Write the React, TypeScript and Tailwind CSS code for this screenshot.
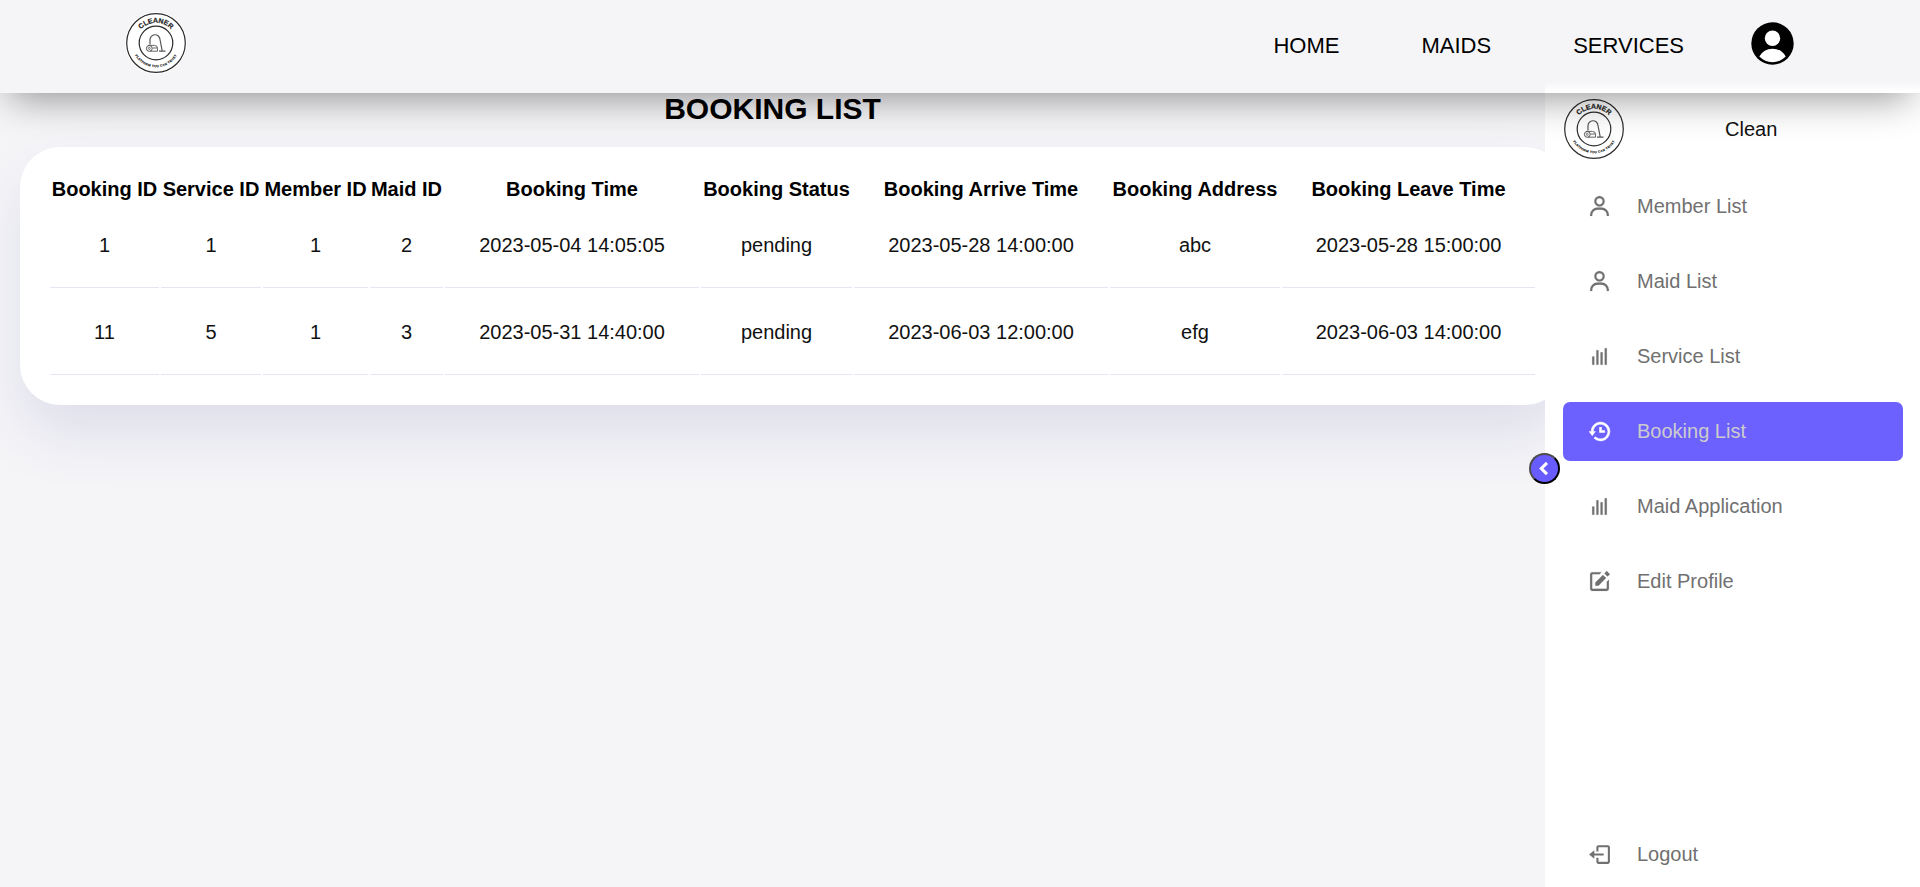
import React from "react";
import { BiUser, BiBarChart, BiHistory, BiSolidEdit, BiLogOut, BiChevronLeft } from "react-icons/bi";

const columns = [
  { title: "Booking ID", width: "w-[109px]" },
  { title: "Service ID", width: "w-[100px]" },
  { title: "Member ID", width: "w-[105px]" },
  { title: "Maid ID", width: "w-[73px]" },
  { title: "Booking Time", width: "w-[254px]" },
  { title: "Booking Status", width: "w-[151px]" },
  { title: "Booking Arrive Time", width: "w-[254px]" },
  { title: "Booking Address", width: "w-[170px]" },
  { title: "Booking Leave Time", width: "w-[253px]" },
];

const bookings = [
  ["1", "1", "1", "2", "2023-05-04 14:05:05", "pending", "2023-05-28 14:00:00", "abc", "2023-05-28 15:00:00"],
  ["11", "5", "1", "3", "2023-05-31 14:40:00", "pending", "2023-06-03 12:00:00", "efg", "2023-06-03 14:00:00"],
];

const menu = [
  { label: "Member List", Icon: BiUser },
  { label: "Maid List", Icon: BiUser },
  { label: "Service List", Icon: BiBarChart },
  { label: "Booking List", Icon: BiHistory, active: true },
  { label: "Maid Application", Icon: BiBarChart },
  { label: "Edit Profile", Icon: BiSolidEdit },
];

function Logo({ id }: { id: string }) {
  return (
    <svg viewBox="0 0 62 62" className="size-[62px] shrink-0" fill="none" stroke="#2b2b2b">
      <circle cx="31" cy="31" r="31" fill="#fff" stroke="none" />
      <circle cx="31" cy="31" r="29.3" strokeWidth="1.2" />
      <circle cx="31" cy="31" r="16.8" strokeWidth="1.2" />
      <path id={`${id}-top`} d="M10.700 31a20.300 20.300 0 0 1 40.600 0" stroke="none" />
      <path id={`${id}-bottom`} d="M6.800 31a24.200 24.200 0 0 0 48.400 0" stroke="none" />
      <text fill="#1c1c1c" stroke="#1c1c1c" strokeWidth="0.2" fontSize="7" fontWeight="700" textAnchor="middle">
        <textPath href={`#${id}-top`} startOffset="50%">CLEANER</textPath>
      </text>
      <text fill="#222" stroke="#222" strokeWidth="0.15" fontSize="3.1" fontWeight="700" textAnchor="middle" letterSpacing="0.3">
        <textPath href={`#${id}-bottom`} startOffset="50%">PLATFORM YOU CAN TRUST</textPath>
      </text>
      <path d="M25 32.500V28a5 5 0 0 1 10-.5l2.200 11.300M34 39.200h6.500" strokeWidth="1.2" stroke="#555" />
      <circle cx="24.300" cy="36.400" r="2.900" strokeWidth="1" stroke="#555" />
      <circle cx="24.300" cy="36.400" r="1" strokeWidth="0.8" stroke="#555" />
      <path d="M23 33.400h6.500a3 3 0 0 1 3 3v2.800H25M27.500 36h5" strokeWidth="0.9" stroke="#555" />
    </svg>
  );
}

export default function App() {
  return (
    <div className="flex h-[887px] w-full flex-col overflow-hidden bg-[#f5f5f8] font-['Liberation_Sans',Arial,sans-serif] text-xl leading-[23px] text-black">
      <header className="relative z-20 flex h-[93px] shrink-0 items-start justify-between bg-[#f5f5f8] bg-[linear-gradient(to_top,#fff,#fff_15%,transparent)] bg-[length:375px_12px] bg-right-bottom bg-no-repeat pl-[125px] pr-[126px] shadow-[0_15px_38px_-10px_rgba(0,0,0,0.42)]">
        <div className="pt-3">
          <Logo id="nav" />
        </div>
        <nav className="flex items-start text-[22px] leading-[26px]">
          <a className="mr-[82px] mt-[33px]">HOME</a>
          <a className="mr-[82px] mt-[33px]">MAIDS</a>
          <a className="mr-[67px] mt-[33px]">SERVICES</a>
          <svg viewBox="0 0 43 43" className="mt-[22px] size-[43px]">
            <circle cx="21.500" cy="21.500" r="21.200" />
            <circle cx="21.500" cy="16.300" r="7.700" fill="#fff" />
            <path d="M8.300 34.600a15 15 0 0 1 26.400 0a18.500 18.500 0 0 1-26.400 0z" fill="#fff" />
          </svg>
        </nav>
      </header>

      <div className="flex min-h-0 flex-1">
        <main className="w-[1545px] shrink-0">
          <h1 className="h-[54px] text-center text-3xl leading-[31px] font-bold">BOOKING LIST</h1>
          <section className="ml-5 h-[258px] w-[1545px] rounded-[40px] bg-white px-7 pt-[28px] shadow-[0_30px_60px_rgba(32,32,128,0.1)]">
            <table className="w-[1489px] table-fixed border-separate border-spacing-[2px] whitespace-nowrap">
              <thead>
                <tr>
                  {columns.map((c) => (
                    <th key={c.title} className={`${c.width} h-6 p-0 pt-px text-center font-bold`}>{c.title}</th>
                  ))}
                </tr>
              </thead>
              <tbody>
                {bookings.map((row) => (
                  <tr key={row[0]}>
                    {row.map((cell, i) => (
                      <td key={i} className="h-[85px] border-b border-[#e6e6f2] p-0 pt-px text-center text-[#111]">{cell}</td>
                    ))}
                  </tr>
                ))}
              </tbody>
            </table>
          </section>
        </main>

        <aside className="relative z-10 flex w-[375px] shrink-0 flex-col bg-white px-[18px] text-[#707070]">
          <div className="flex h-[76px] items-start pt-[5px]">
            <Logo id="side" />
            <span className="ml-[100px] mt-5 text-[#111]">Clean</span>
          </div>
          <ul className="flex flex-col gap-4 pt-2">
            {menu.map(({ label, Icon, active }) => (
              <li
                key={label}
                className={`flex h-[59px] w-[340px] items-center rounded-[7px] ${active ? "bg-[#6c60ff] text-[#ccc]" : ""}`}
              >
                <span className="flex w-[74px] justify-center pr-px">
                  <Icon
                    className={active ? "size-[25px] text-white" : "size-[25px]"}
                    stroke="currentColor"
                    strokeWidth={active ? 0.5 : 0.15}
                  />
                </span>
                {label}
              </li>
            ))}
          </ul>
          <div className="mt-auto mb-[3px] flex h-[59px] items-center">
            <span className="flex w-[74px] justify-center pr-px">
              <BiLogOut className="size-[25px]" />
            </span>
            Logout
          </div>
          <button className="absolute top-[360px] -left-4 flex size-[31px] items-center justify-center rounded-full border-2 border-t-[#4d4d4d] border-r-black border-b-black border-l-[#4d4d4d] bg-[#695cfe] text-white">
            <BiChevronLeft className="size-[25px] shrink-0" stroke="currentColor" strokeWidth="1" />
          </button>
        </aside>
      </div>
    </div>
  );
}
